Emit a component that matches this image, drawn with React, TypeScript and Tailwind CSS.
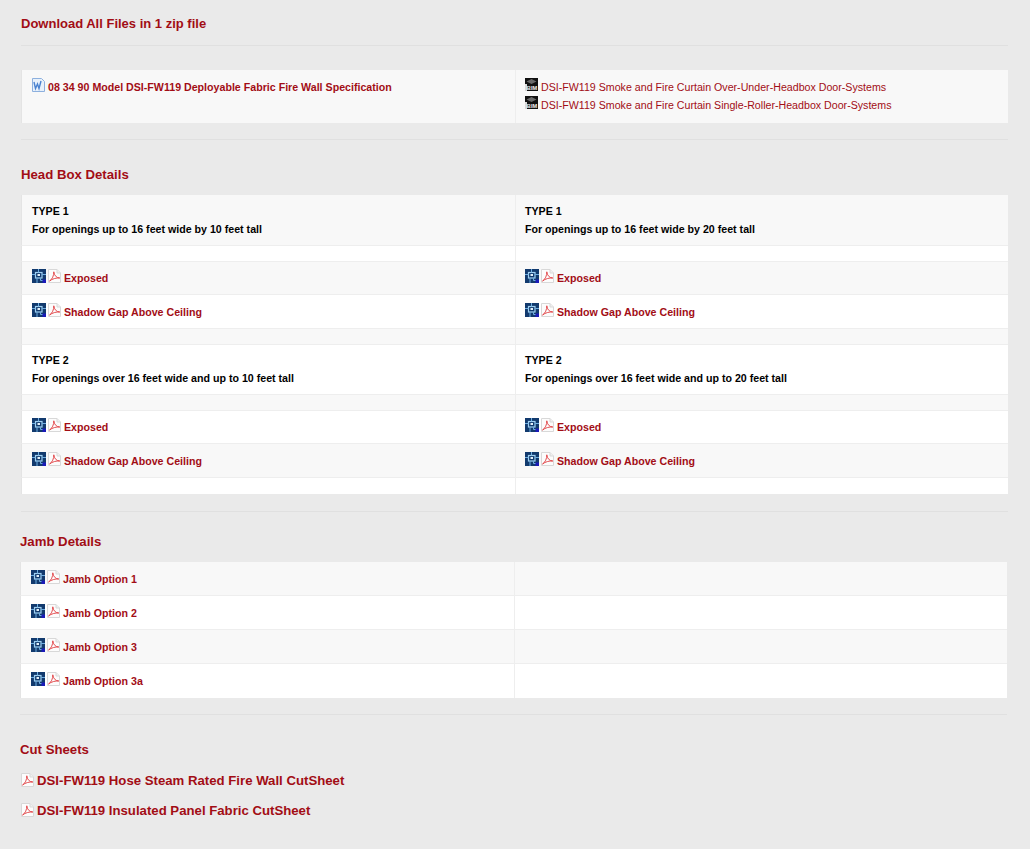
import type { ReactNode } from "react";

const RED = "text-[#a20d15]";

function PdfIcon() {
  return (
    <svg width="13" height="14" viewBox="0 0 13 14" className="inline-block shrink-0">
      <path d="M.5 .5H9L12.5 4V13.5H.5Z" fill="#fcfcfc" stroke="#d8d8d8" />
      <path d="M9 .5V4H12.5" fill="#efefef" stroke="#d8d8d8" />
      <path
        d="M1.5 12C4.2 10.4 6 6.5 5.8 2.8C6.2 6.4 8.3 8.8 11.8 9C8.2 8.7 4.4 9.8 1.5 12Z"
        fill="none"
        stroke="#e03c40"
        strokeWidth="0.9"
        strokeLinejoin="round"
      />
    </svg>
  );
}

function CadIcon() {
  return (
    <svg width="14" height="14" viewBox="0 0 14 14" className="inline-block shrink-0">
      <rect width="14" height="14" fill="#123a6e" />
      <rect x="3.5" y="3.5" width="6.5" height="5.5" fill="none" stroke="#9fd0f2" strokeWidth="1.2" />
      <path d="M6.5 0V3.5M0 5.5H3.5M10 5.5H14M5 9V14M8.5 9V11.5H11" stroke="#6faee0" strokeWidth="1" fill="none" />
      <rect x="5.5" y="5" width="2.5" height="2" fill="#e2f1fb" />
      <rect x="10.5" y="10.5" width="3.5" height="3.5" fill="#1a1ab8" />
    </svg>
  );
}

function WordIcon() {
  return (
    <svg width="13" height="14" viewBox="0 0 13 14" className="inline-block shrink-0">
      <path d="M.5 .5H9.5L12.5 3.5V13.5H.5Z" fill="#e8f1fb" stroke="#8db0de" />
      <path d="M2 4L3.5 10.5L5.5 6L7 10.5L9 3" fill="none" stroke="#4a82d0" strokeWidth="1.4" />
    </svg>
  );
}

function BimIcon() {
  return (
    <svg width="13" height="13" viewBox="0 0 13 13" className="inline-block shrink-0">
      <rect width="13" height="13" fill="#111111" />
      <path d="M1.5 3.5L6.5 1L11.5 3.5L6.5 6Z" fill="#6a6a6a" />
      <path d="M0 6H2V13H0Z" fill="#d8d8d8" />
      <text x="7" y="12.2" textAnchor="middle" fontSize="5.6" fontWeight="700" fill="#f2f2f2">
        BIM
      </text>
    </svg>
  );
}

function DetailLink({ label }: { label: string }) {
  return (
    <a className={`flex items-start font-bold text-[10.65px] leading-[17px] ${RED}`}>
      <span className="flex gap-[2px] mr-[3px]">
        <CadIcon />
        <PdfIcon />
      </span>
      <span className="mt-[1px]">{label}</span>
    </a>
  );
}

function TypeCell({ type, text }: { type: string; text: string }) {
  return (
    <div className="font-bold text-[10.65px] leading-[18px] text-black">
      <div>{type}</div>
      <div>{text}</div>
    </div>
  );
}

function Row({
  odd,
  h,
  pt = "",
  left,
  right,
}: {
  odd: boolean;
  h: string;
  pt?: string;
  left?: ReactNode;
  right?: ReactNode;
}) {
  return (
    <div
      className={`grid grid-cols-[494px_1fr] border-l border-b border-l-[#e4e4e4] border-b-[#eeeeee] last:border-b-0 ${h} ${
        odd ? "bg-[#f8f8f8]" : "bg-white"
      }`}
    >
      <div className={`border-r border-[#eeeeee] pl-[10px] ${pt}`}>{left}</div>
      <div className={`pl-[9px] ${pt}`}>{right}</div>
    </div>
  );
}

function Heading({ children }: { children: ReactNode }) {
  return <h3 className={`font-bold text-[13.2px] leading-[20px] ${RED}`}>{children}</h3>;
}

function CutSheet({ label, mt }: { label: string; mt: string }) {
  return (
    <a className={`${mt} pl-[1px] flex items-start gap-[3px] font-bold text-[13.2px] leading-[20px] ${RED}`}>
      <span className="mt-[2px] flex">
        <PdfIcon />
      </span>
      <span>{label}</span>
    </a>
  );
}

export default function App() {
  return (
    <div className="bg-[#eaeaea] min-h-[849px] font-['Liberation_Sans',Arial,sans-serif] pt-[14px]">
      <div className="ml-[21px] w-[987px]">
        <h2 className={`font-bold text-[13px] leading-[20px] ${RED}`}>Download All Files in 1 zip file</h2>
        <hr className="mt-[11px] border-[#e0e0e0]" />

        <div className="mt-[24px] grid grid-cols-[494px_1fr] border-l border-l-[#e4e4e4] bg-[#f8f8f8] h-[53px]">
          <div className="border-r border-[#eeeeee] pl-[10px] pt-[8px]">
            <a className={`flex items-start gap-[3px] font-bold text-[10.65px] leading-[17px] ${RED}`}>
              <WordIcon />
              <span className="mt-[1px]">08 34 90 Model DSI-FW119 Deployable Fabric Fire Wall Specification</span>
            </a>
          </div>
          <div className="pl-[9px] pt-[8px] flex flex-col">
            <a className={`flex items-start gap-[3px] text-[10.65px] leading-[17px] ${RED}`}>
              <BimIcon />
              <span className="mt-[1px]">DSI-FW119 Smoke and Fire Curtain Over-Under-Headbox Door-Systems</span>
            </a>
            <a className={`flex items-start gap-[3px] text-[10.65px] leading-[17px] ${RED}`}>
              <BimIcon />
              <span className="mt-[1px]">DSI-FW119 Smoke and Fire Curtain Single-Roller-Headbox Door-Systems</span>
            </a>
          </div>
        </div>
        <hr className="mt-[16px] border-[#e0e0e0]" />

        <div className="mt-[25px]">
          <Heading>Head Box Details</Heading>
        </div>
        <div className="mt-[10px]">
          <Row
            odd
            h="h-[51px]"
            pt="pt-[7px]"
            left={<TypeCell type="TYPE 1" text="For openings up to 16 feet wide by 10 feet tall" />}
            right={<TypeCell type="TYPE 1" text="For openings up to 16 feet wide by 20 feet tall" />}
          />
          <Row odd={false} h="h-[16px]" />
          <Row odd h="h-[33px]" pt="pt-[7px]" left={<DetailLink label="Exposed" />} right={<DetailLink label="Exposed" />} />
          <Row
            odd={false}
            h="h-[34px]"
            pt="pt-[8px]"
            left={<DetailLink label="Shadow Gap Above Ceiling" />}
            right={<DetailLink label="Shadow Gap Above Ceiling" />}
          />
          <Row odd h="h-[16px]" />
          <Row
            odd={false}
            h="h-[50px]"
            pt="pt-[6px]"
            left={<TypeCell type="TYPE 2" text="For openings over 16 feet wide and up to 10 feet tall" />}
            right={<TypeCell type="TYPE 2" text="For openings over 16 feet wide and up to 20 feet tall" />}
          />
          <Row odd h="h-[16px]" />
          <Row odd={false} h="h-[33px]" pt="pt-[7px]" left={<DetailLink label="Exposed" />} right={<DetailLink label="Exposed" />} />
          <Row
            odd
            h="h-[34px]"
            pt="pt-[8px]"
            left={<DetailLink label="Shadow Gap Above Ceiling" />}
            right={<DetailLink label="Shadow Gap Above Ceiling" />}
          />
          <Row odd={false} h="h-[16px]" />
        </div>
        <hr className="mt-[17px] border-[#e0e0e0]" />
      </div>

      <div className="ml-[20px] w-[987px]">
        <div className="mt-[20px]">
          <Heading>Jamb Details</Heading>
        </div>
        <div className="mt-[10px]">
          <Row odd h="h-[34px]" pt="pt-[8px]" left={<DetailLink label="Jamb Option 1" />} />
          <Row odd={false} h="h-[34px]" pt="pt-[8px]" left={<DetailLink label="Jamb Option 2" />} />
          <Row odd h="h-[34px]" pt="pt-[8px]" left={<DetailLink label="Jamb Option 3" />} />
          <Row odd={false} h="h-[34px]" pt="pt-[8px]" left={<DetailLink label="Jamb Option 3a" />} />
        </div>
        <hr className="mt-[16px] border-[#e0e0e0]" />

        <div className="mt-[25px]">
          <Heading>Cut Sheets</Heading>
        </div>
        <CutSheet mt="mt-[11px]" label="DSI-FW119 Hose Steam Rated Fire Wall CutSheet" />
        <CutSheet mt="mt-[10px]" label="DSI-FW119 Insulated Panel Fabric CutSheet" />
      </div>
    </div>
  );
}
